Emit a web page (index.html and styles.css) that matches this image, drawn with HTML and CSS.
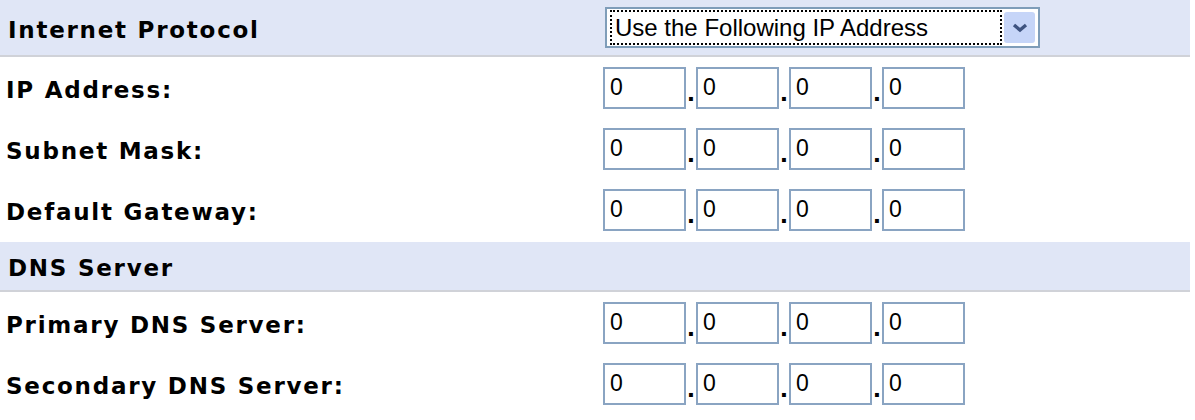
FILE: index.html
```html
<!DOCTYPE html>
<html lang="en">
<head>
  <meta charset="UTF-8">
  <title>Internet Protocol Settings</title>
  <link rel="stylesheet" href="styles.css">
</head>
<body>

  <div class="settings">

    <!-- Internet Protocol -->
    <div class="section-head first">
      <div class="label">Internet Protocol</div>
      <div class="field">
        <div class="select">
          <span class="select-text">Use the Following IP Address</span>
          <span class="select-btn">
            <svg width="16" height="12" viewBox="0 0 16 12">
              <path d="M2 3 L8 8 L14 3" fill="none" stroke="#3e5380" stroke-width="3.4"/>
            </svg>
          </span>
        </div>
      </div>
    </div>

    <div class="row">
      <div class="label">IP Address:</div>
      <div class="field ip">
        <input type="text" value="0"><span class="dot">.</span><input type="text" value="0"><span class="dot">.</span><input type="text" value="0"><span class="dot">.</span><input type="text" value="0">
      </div>
    </div>

    <div class="row">
      <div class="label">Subnet Mask:</div>
      <div class="field ip">
        <input type="text" value="0"><span class="dot">.</span><input type="text" value="0"><span class="dot">.</span><input type="text" value="0"><span class="dot">.</span><input type="text" value="0">
      </div>
    </div>

    <div class="row">
      <div class="label">Default Gateway:</div>
      <div class="field ip">
        <input type="text" value="0"><span class="dot">.</span><input type="text" value="0"><span class="dot">.</span><input type="text" value="0"><span class="dot">.</span><input type="text" value="0">
      </div>
    </div>

    <!-- DNS -->
    <div class="section-head">
      <div class="label">DNS Server</div>
    </div>

    <div class="row">
      <div class="label">Primary DNS Server:</div>
      <div class="field ip">
        <input type="text" value="0"><span class="dot">.</span><input type="text" value="0"><span class="dot">.</span><input type="text" value="0"><span class="dot">.</span><input type="text" value="0">
      </div>
    </div>

    <div class="row">
      <div class="label">Secondary DNS Server:</div>
      <div class="field ip">
        <input type="text" value="0"><span class="dot">.</span><input type="text" value="0"><span class="dot">.</span><input type="text" value="0"><span class="dot">.</span><input type="text" value="0">
      </div>
    </div>

  </div>

</body>
</html>
```

FILE: styles.css
```css
body {
  margin: 0;
  padding: 0;
  background-color: #fff;
  font-family: 'DejaVu Sans', 'Verdana', sans-serif;
  color: #000;
}

.settings {
  width: 1190px;
}

.section-head {
  display: flex;
  align-items: center;
  height: 48px;
  margin-top: 2px;
  background-color: #e0e6f6;
  border-bottom: 2px solid #d0d2d8;
}

.section-head.first {
  height: 55px;
  margin-top: 0;
}

.section-head .label {
  padding-left: 8px;
}

.row {
  display: flex;
  align-items: center;
  height: 61px;
}

.label {
  width: 597px;
  padding-left: 6px;
  font-size: 23px;
  font-weight: bold;
  letter-spacing: 1.75px;
  padding-top: 4px;
  white-space: nowrap;
}

.field {
  display: flex;
  align-items: center;
}

/* fake dropdown */
.select {
  display: flex;
  align-items: center;
  box-sizing: border-box;
  width: 435px;
  height: 41px;
  border: 2px solid #7f9db9;
  background-color: #fff;
  padding: 2px 3px 2px 3px;
}

.select-text {
  flex: 1;
  height: 31px;
  line-height: 31px;
  border: 2px dotted #000;
  padding-left: 3px;
  font-family: 'Liberation Sans', 'Arial', sans-serif;
  font-size: 24px;
}

.select-btn {
  display: flex;
  align-items: center;
  justify-content: center;
  width: 31px;
  height: 31px;
  margin-left: 2px;
  background-color: #c6d5f8;
  border-radius: 3px;
}

/* ip address boxes */
.ip input {
  box-sizing: border-box;
  width: 83px;
  height: 42px;
  margin: 0;
  border: 2px solid #8aa4c2;
  padding: 0 0 0 5px;
  font-family: 'Liberation Sans Narrow', 'Liberation Sans', 'Arial', sans-serif;
  font-size: 23px;
  color: #000;
  outline: none;
}

.dot {
  display: inline-block;
  width: 10px;
  text-align: center;
  font-size: 22px;
  font-weight: bold;
  align-self: flex-end;
  line-height: 30px;
}
```
